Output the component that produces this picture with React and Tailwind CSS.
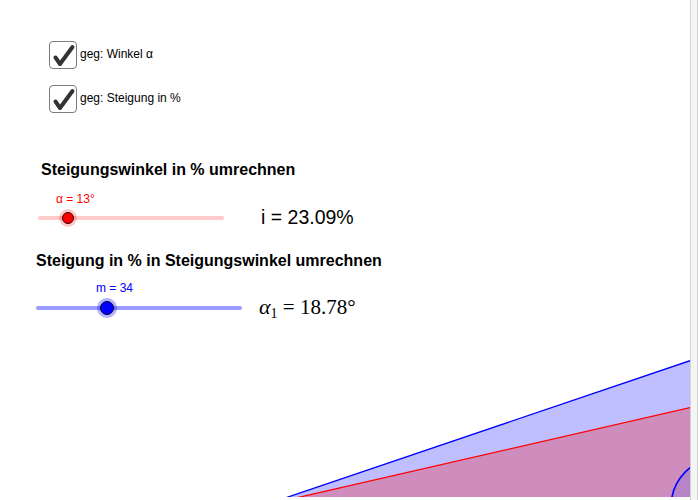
import React from "react";

function CheckBox({ label, first }) {
  return (
    <div className={`flex items-start ${first ? "" : "mt-[16px]"}`}>
      <div className="w-[28px] h-[28px] border-[1.5px] border-[#7c7c7c] rounded-[4px] bg-white flex items-center justify-center">
        <svg width="26" height="26" viewBox="0 0 26 26">
          <path d="M5.5 15.5 L10 22 L22.5 5" fill="none" stroke="#333333" strokeWidth="4" strokeLinecap="round" strokeLinejoin="round" />
        </svg>
      </div>
      <span className="ml-[3px] mt-[6px] text-[12px] leading-[14px] text-black">{label}</span>
    </div>
  );
}

function Geometry() {
  const V = [263, 505.5];
  const blueY = 360.7;
  const redY = 407.7;
  return (
    <svg className="absolute left-0 top-0" width="690" height="497" viewBox="0 0 690 497">
      <polygon points={`${V[0]},${V[1]} 690,${blueY} 690,600`} fill="#bfbfff" />
      <polygon points={`${V[0]},${V[1]} 690,${redY} 690,600`} fill="#cf8dbe" />
      <circle cx="721" cy="507" r="50" fill="#b884c8" stroke="#0000ff" strokeWidth="1.6" />
      <line x1={V[0]} y1={V[1]} x2="690" y2={blueY} stroke="#0000ff" strokeWidth="1.3" />
      <line x1={V[0]} y1={V[1]} x2="690" y2={redY} stroke="#ff0000" strokeWidth="1.3" />
    </svg>
  );
}

export default function App() {
  return (
    <div className="w-[700px] h-[500px] flex bg-white overflow-hidden font-['Liberation_Sans',Arial,sans-serif]">
      <div className="relative w-[690px] h-[500px]">
        <Geometry />
        <div className="relative flex flex-col">
          <div className="pt-[41px] pl-[49px] flex flex-col">
            <CheckBox first label="geg: Winkel α" />
            <CheckBox label="geg: Steigung in %" />
          </div>

          <div className="mt-[48px] ml-[41px] text-[16px] leading-[18px] font-bold text-black">
            Steigungswinkel in % umrechnen
          </div>

          <div className="flex items-start mt-[13px]">
            <div className="flex flex-col w-[224px]">
              <span className="ml-[56px] text-[12px] leading-[14px] text-[#ff0000]">α = 13°</span>
              <div className="relative ml-[38px] mt-[10px] w-[186px] h-[4px] rounded-full bg-[#ffcaca]">
                <div className="absolute left-[30px] top-1/2 -translate-x-1/2 -translate-y-1/2 w-[12px] h-[12px] rounded-full bg-[#ff0000] border border-[#330000] shadow-[0_0_0_3px_rgba(255,0,0,0.22)]" />
              </div>
            </div>
            <div className="ml-[37px] mt-[14px] text-[19.5px] leading-[22px] text-black">
              i = 23.09%
            </div>
          </div>

          <div className="mt-[24px] ml-[36px] text-[16px] leading-[18px] font-bold text-black">
            Steigung in % in Steigungswinkel umrechnen
          </div>

          <div className="flex items-start mt-[11px]">
            <div className="flex flex-col w-[242px]">
              <span className="ml-[96px] text-[12px] leading-[14px] text-[#0000ff]">m = 34</span>
              <div className="relative ml-[36px] mt-[11px] w-[206px] h-[4px] rounded-full bg-[#9b9bff]">
                <div className="absolute left-[71px] top-1/2 -translate-x-1/2 -translate-y-1/2 w-[14px] h-[14px] rounded-full bg-[#0000ff] border border-[#000033] shadow-[0_0_0_3px_rgba(0,0,255,0.3)]" />
              </div>
            </div>
            <div className="ml-[17px] mt-[14px] text-[21px] leading-[24px] text-black font-['Liberation_Serif',serif]">
              <i className="text-[22px]">α</i>
              <span className="text-[14px] relative top-[4px]">1</span>
              <span> = 18.78°</span>
            </div>
          </div>
        </div>
      </div>
      <div className="w-[8px] h-[500px] border-l border-r border-[#d2d2d2] bg-[#f5f5f5]" />
      <div className="w-[2px] h-[500px] bg-white" />
    </div>
  );
}
